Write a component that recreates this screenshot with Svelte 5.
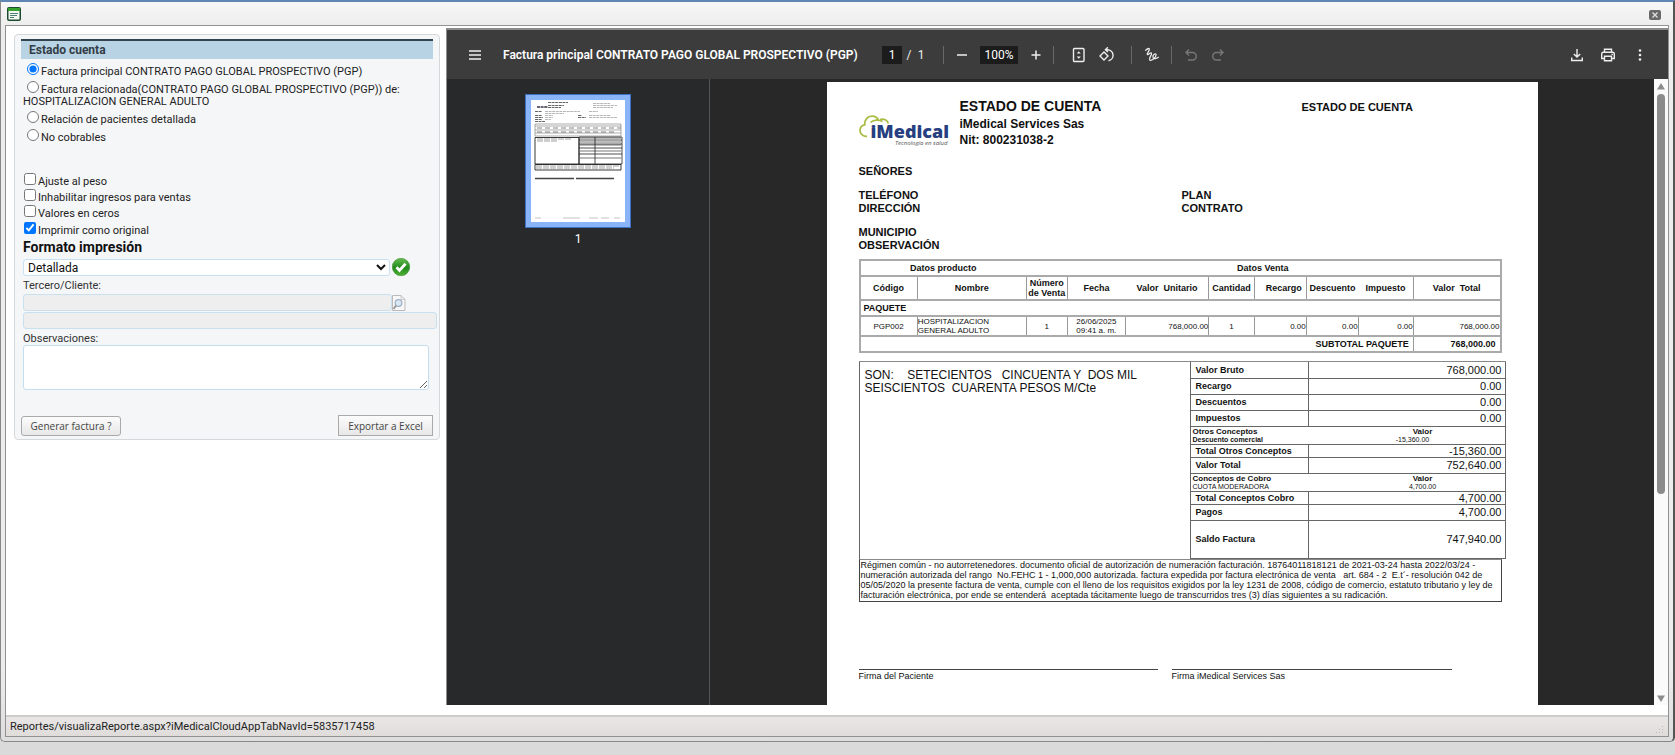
<script>
  let mode = $state('principal');
  let format = $state('Detallada');
  const radios = [
    ['principal', 'Factura principal CONTRATO PAGO GLOBAL PROSPECTIVO (PGP)'],
    ['relacionada', 'Factura relacionada(CONTRATO PAGO GLOBAL PROSPECTIVO (PGP)) de: HOSPITALIZACION GENERAL ADULTO'],
    ['pacientes', 'Relación de pacientes detallada'],
    ['cobrables', 'No cobrables']
  ];
  let checks = $state([
    { label: 'Ajuste al peso', on: false },
    { label: 'Inhabilitar ingresos para ventas', on: false },
    { label: 'Valores en ceros', on: false },
    { label: 'Imprimir como original', on: true }
  ]);
  const legal = [
    'Régimen común - no autorretenedores. documento oficial de autorización de numeración facturación. 18764011818121 de 2021-03-24 hasta 2022/03/24 -',
    'numeración autorizada del rango  No.FEHC 1 - 1,000,000 autorizada. factura expedida por factura electrónica de venta   art. 684 - 2  E.t´- resolución 042 de',
    '05/05/2020 la presente factura de venta, cumple con el lleno de los requisitos exigidos por la ley 1231 de 2008, código de comercio, estatuto tributario y ley de',
    'facturación electrónica, por ende se entenderá  aceptada tácitamente luego de transcurridos tres (3) días siguientes a su radicación.'
  ];
</script>

<div class="window">
  <header class="titlebar">
    <svg width="14" height="14" viewBox="0 0 14 14" aria-hidden="true">
      <rect x=".75" y=".75" width="12.5" height="12.5" rx="1.2" fill="#f4faf2" stroke="#1c4a2e" stroke-width="1.5" />
      <rect x="1" y="1" width="12" height="3" fill="#35a12f" />
      <path d="M3 6.5h8M3 8.5h7M3 10.5h4" stroke="#4b8174" />
    </svg>
    <button class="close" aria-label="Cerrar">
      <svg width="12" height="10" viewBox="0 0 12 10"><path d="M3.5 2.5l5 5M8.5 2.5l-5 5" stroke="#ddd" stroke-width="1.4" /></svg>
    </button>
  </header>

  <div class="frame">
    <div class="body">
      <aside>
        <form class="panel" onsubmit={(e) => e.preventDefault()}>
          <h2>Estado cuenta</h2>
          <div class="fields">
            <div class="radios">
              {#each radios as [value, label]}
                <label><input type="radio" name="mode" {value} bind:group={mode} />{label}</label>
              {/each}
            </div>
            <div class="checks">
              {#each checks as c}
                <label><input type="checkbox" bind:checked={c.on} />{c.label}</label>
              {/each}
            </div>
            <label class="format" for="format">Formato impresión</label>
            <div class="select-row">
              <select id="format" bind:value={format}><option>Detallada</option></select>
              <button class="plain" aria-label="Aceptar">
                <svg width="20" height="18" viewBox="0 0 20 18">
                  <defs><linearGradient id="ok" x1="0" y1="0" x2="0" y2="1"><stop offset="0" stop-color="#66bd4f" /><stop offset=".55" stop-color="#218a1d" /><stop offset="1" stop-color="#4fb334" /></linearGradient></defs>
                  <circle cx="9" cy="9" r="8.7" fill="url(#ok)" stroke="#3f8b34" stroke-width=".6" />
                  <path d="M4.5 9.2l3 3.2 6-6.6" fill="none" stroke="#fff" stroke-width="2.8" />
                </svg>
              </button>
            </div>
            <label class="small" for="tercero">Tercero/Cliente:</label>
            <div class="search-row">
              <input id="tercero" disabled />
              <button class="plain" aria-label="Buscar">
                <svg width="14" height="16" viewBox="0 0 14 16">
                  <path d="M.5.5h8.500l4 4v11H.5z" fill="#f7f7f7" stroke="#bbb" /><path d="M9 .5v4h4" fill="none" stroke="#ccc" />
                  <circle cx="6.500" cy="8" r="3.300" fill="#d9e8f5" stroke="#a3b2c2" stroke-width="1.300" /><path d="M4 10.500l-2.500 3.500" stroke="#999" stroke-width="2" />
                </svg>
              </button>
            </div>
            <input class="name" aria-label="Nombre del tercero" disabled />
            <label class="small obs" for="obs">Observaciones:</label>
            <textarea id="obs"></textarea>
          </div>
          <div class="actions">
            <button class="generate">Generar factura ?</button>
            <button class="export">Exportar a Excel</button>
          </div>
        </form>
      </aside>

      <section class="viewer">
        <div class="toolbar">
          <div class="left">
            <button class="plain" aria-label="Menú"><svg width="14" height="12" viewBox="0 0 14 12"><path d="M1 2h12M1 6h12M1 10h12" stroke="#eee" stroke-width="1.500" /></svg></button>
            <strong>Factura principal CONTRATO PAGO GLOBAL PROSPECTIVO (PGP)</strong>
          </div>
          <div class="center">
            <input class="pageno" aria-label="Página" value="1" /><span class="slash">/</span><span class="count">1</span>
            <i class="sep"></i>
            <button class="plain tool" aria-label="Alejar"><svg width="12" height="12" viewBox="0 0 12 12"><path d="M1 6h10" stroke="#eee" stroke-width="1.500" /></svg></button>
            <input class="zoom" aria-label="Zoom" value="100%" />
            <button class="plain tool" aria-label="Acercar"><svg width="12" height="12" viewBox="0 0 12 12"><path d="M1.500 6h9M6 1.500v9" stroke="#eee" stroke-width="1.500" /></svg></button>
            <i class="sep two"></i>
            <button class="plain tool" aria-label="Ajustar a la página"><svg width="16" height="16" viewBox="0 0 16 16" fill="none"><rect x="2.500" y="1.500" width="10.500" height="13" rx="1" stroke="#eee" stroke-width="1.400" /><path d="M5.700 6.500l2.050-2.300 2.050 2.300zM5.700 9.500l2.050 2.300 2.050-2.300z" fill="#eee" /></svg></button>
            <button class="plain tool" aria-label="Girar"><svg width="16" height="16" viewBox="0 0 16 16" fill="none" stroke="#eee" stroke-width="1.400"><path d="M5 5l4 4-4 4-4-4z" /><path d="M6.500 2.700h2a5.600 5.600 0 0 1 1 11.100M8.900.3L6.400 2.700l2.500 2.400" /></svg></button>
            <i class="sep three"></i>
            <button class="plain tool" aria-label="Dibujar"><svg width="16" height="16" viewBox="0 0 16 16" fill="none" stroke="#eee" stroke-width="1.300"><path d="M1.300 3.600C2.600 2.200 4.500.8 5.300 1.900 6.200 3.300 2.400 6.500 3.400 7.500 4.200 8.300 6.300 5.200 7.400 6.100 8.600 7.300 4.500 11 5.600 12.800 7 14.700 12.300 10.500 12.100 7.600 11.900 5.500 8.300 7.800 9 10.300 9.700 12.600 13 11.400 14.800 10" /></svg></button>
            <i class="sep four"></i>
            <button class="plain tool" aria-label="Deshacer"><svg width="14" height="14" viewBox="0 0 14 14" fill="none" stroke="#777" stroke-width="1.400"><path d="M5 1.500L2 4.500l3 3M2 4.500h6.500a3.600 3.600 0 0 1 0 7.500H4" /></svg></button>
            <button class="plain tool redo" aria-label="Rehacer"><svg width="14" height="14" viewBox="0 0 14 14" fill="none" stroke="#777" stroke-width="1.400"><path d="M9 1.500l3 3-3 3M12 4.500H5.500a3.600 3.600 0 0 0 0 7.500H10" /></svg></button>
          </div>
          <div class="right">
            <button class="plain tool" aria-label="Descargar"><svg width="14" height="14" viewBox="0 0 14 14" fill="none" stroke="#eee" stroke-width="1.400"><path d="M7 1v8M3.800 5.900L7 9.100l3.200-3.200M1.700 9.500v3h10.600v-3" /></svg></button>
            <button class="plain tool" aria-label="Imprimir"><svg width="16" height="16" viewBox="0 0 16 16" fill="none" stroke="#eee" stroke-width="1.400"><path d="M4.500 5V2.200h7V5M4.200 11.500H1.700V7q0-1.700 1.700-1.700h9.200q1.700 0 1.700 1.700v4.500h-2.500M4.500 9.200h7v4.600h-7z" /><path d="M11.500 7.400h1.400" /></svg></button>
            <button class="plain tool" aria-label="Más"><svg width="8" height="14" viewBox="0 0 8 14" fill="#eee"><circle cx="4" cy="2.500" r="1.300" /><circle cx="4" cy="7" r="1.300" /><circle cx="4" cy="11.500" r="1.300" /></svg></button>
          </div>
        </div>

        <div class="stage">
          <nav class="thumbs">
            <svg class="thumb" viewBox="0 0 94 122" aria-hidden="true">
              <rect width="94" height="122" fill="#fff" />
              <g stroke="#555" stroke-width=".9" stroke-dasharray="3 .6">
                <path d="M17 2.500h20M17 5.500h16M17 7.500h13" /><path d="M6 7h11" stroke="#334" stroke-width="1.600" /><path d="M62 3.500h17M62 5.500h24M62 7.500h20" stroke="#999" stroke-width=".7" />
                <path d="M4 11.500h7M4 15.500h7M4 17.500h8M4 19.500h7M4 21.500h10M47 15.500h4M47 17.500h8" />
                <path d="M14 11.500h35M14 13.500h19M14 15.500h8M14 17.500h8M14 19.500h6M58 11.500h9M58 15.500h22M58 17.500h28" stroke="#999" stroke-width=".7" />
              </g>
              <g fill="none" stroke="#888" stroke-width=".7"><path d="M4 24h86v12H4zM4 26h86M4 30h86M4 33h86" /><path d="M6 28h84M6 32h80" stroke="#555" stroke-dasharray="5 3" /></g>
              <g fill="none" stroke="#222"><path d="M4 37.500h44V64H4zM4 64.500h86v5.500H4z" stroke-width=".9" /><path d="M49 38h41M49 42h41M49 45h41M49 51h41M49 58h41" stroke="#777" stroke-width="1.200" /><path d="M48 37h43v27H48zM64 37v27M48 40h43M48 44h43M48 48h43M48 54h43" stroke-width=".8" /><path d="M6 39h34M6 41h20M5 66h83M5 68h78" stroke="#777" stroke-width=".7" stroke-dasharray="6 1" /></g>
              <path d="M4 78.500h39M45 78.500h38" stroke="#444" stroke-width="1.400" /><path d="M4 118h6M32 118h17M58 118h9M70 118h8M83 118h6" stroke="#aaa" stroke-width=".7" />
            </svg>
            <span>1</span>
          </nav>

          <div class="canvas">
            <article class="page">
              <div class="head">
                <div class="logo">
                  <svg width="34" height="24" viewBox="0 0 34 24" aria-hidden="true" fill="none" stroke="#a9bd44" stroke-width="1.800"><path d="M8 21.500C3.500 21.500 1 18.500 1 15.500c0-3 2.300-5.200 4.700-5.700C5.300 5 8.500 1.200 13 1.200c3.300 0 5.700 2 6.800 4.500M11.500 7.500c2.300-2.500 8.500-3.500 12-1M21 4.500c4-1.500 7.500 1 8.300 4" /></svg>
                  <b>iMedical</b><em>Tecnología en salud</em>
                </div>
                <div class="company">
                  <h1>ESTADO DE CUENTA</h1>
                  <p>iMedical Services Sas</p>
                  <p>Nit: 800231038-2</p>
                </div>
                <h3>ESTADO DE CUENTA</h3>
              </div>

              <div class="meta">
                <p class="gap">SEÑORES</p><p></p>
                <p>TELÉFONO</p><p>PLAN</p>
                <p class="gap">DIRECCIÓN</p><p>CONTRATO</p>
                <p>MUNICIPIO</p><p></p>
                <p>OBSERVACIÓN</p><p></p>
              </div>

              <table class="items">
                <colgroup><col style="width:9%" /><col style="width:17%" /><col style="width:6.4%" /><col style="width:9.1%" /><col style="width:13%" /><col style="width:7.1%" /><col style="width:8.1%" /><col style="width:8.1%" /><col style="width:8.6%" /><col style="width:13.6%" /></colgroup>
                <tbody>
                  <tr class="r1"><th colspan="2" class="nr">Datos producto</th><th colspan="8">Datos Venta</th></tr>
                  <tr class="r2"><th>Código</th><th>Nombre</th><th>Número<br />de&nbsp;Venta</th><th class="nr">Fecha</th><th>Valor&nbsp; Unitario</th><th>Cantidad</th><th class="r">Recargo</th><th class="nr">Descuento</th><th>Impuesto</th><th>Valor&nbsp; Total</th></tr>
                  <tr class="r1"><th colspan="10" class="l">PAQUETE</th></tr>
                  <tr class="r3"><td>PGP002</td><td class="l0">HOSPITALIZACION<br />GENERAL ADULTO</td><td>1</td><td>26/06/2025<br />09:41 a. m.</td><td class="r0">768,000.00</td><td>1</td><td class="r0">0.00</td><td class="r0">0.00</td><td class="r0">0.00</td><td class="r0">768,000.00</td></tr>
                  <tr class="r4"><th colspan="9" class="r">SUBTOTAL PAQUETE</th><th class="r">768,000.00</th></tr>
                </tbody>
              </table>

              <div class="summary">
                <p class="words">SON:    SETECIENTOS   CINCUENTA Y  DOS MIL
SEISCIENTOS  CUARENTA PESOS M/Cte</p>
                <table class="totals">
                  <colgroup><col style="width:37.500%" /><col /></colgroup>
                  <tbody>
                    <tr class="t16"><th>Valor Bruto</th><td>768,000.00</td></tr>
                    <tr class="t16"><th>Recargo</th><td>0.00</td></tr>
                    <tr class="t16"><th>Descuentos</th><td>0.00</td></tr>
                    <tr class="t16"><th>Impuestos</th><td>0.00</td></tr>
                    <tr class="t18"><td colspan="2"><div class="mini"><b>Otros Conceptos</b><b>Valor</b><b class="tiny">Descuento comercial</b><span class="tiny neg">-15,360.00</span></div></td></tr>
                    <tr class="t13"><th>Total Otros Conceptos</th><td>-15,360.00</td></tr>
                    <tr class="t16"><th>Valor Total</th><td>752,640.00</td></tr>
                    <tr class="t18"><td colspan="2"><div class="mini"><b>Conceptos de Cobro</b><b>Valor</b><span class="tiny">CUOTA MODERADORA</span><span class="tiny">4,700.00</span></div></td></tr>
                    <tr class="t13"><th>Total Conceptos Cobro</th><td>4,700.00</td></tr>
                    <tr class="t16"><th>Pagos</th><td>4,700.00</td></tr>
                    <tr class="t38"><th>Saldo Factura</th><td>747,940.00</td></tr>
                  </tbody>
                </table>
              </div>

              <div class="legal">{#each legal as line}<p>{line}</p>{/each}</div>

              <div class="signs"><p>Firma del Paciente</p><p>Firma iMedical Services Sas</p></div>
            </article>
          </div>

          <div class="scroll" aria-hidden="true">
            <svg width="10" height="7" viewBox="0 0 10 7"><path d="M5 0l4 6.500H1z" fill="#8b8b8b" /></svg>
            <div class="track"><div class="bar"></div></div>
            <svg width="10" height="7" viewBox="0 0 10 7"><path d="M5 7l4-6.500H1z" fill="#8b8b8b" /></svg>
          </div>
        </div>
      </section>
    </div>
    <footer>
      <span>Reportes/visualizaReporte.aspx?iMedicalCloudAppTabNavId=5835717458</span>
      <svg width="9" height="9" viewBox="0 0 9 9" fill="#bbb" aria-hidden="true"><path d="M7 1h1v1H7zM4 4h1v1H4zM7 4h1v1H7zM1 7h1v1H1zM4 7h1v1H4zM7 7h1v1H7z" /></svg>
    </footer>
  </div>
</div>

<style>
  :global(body) { background: #d8d8d8; }
  :global(#app) { height: 100vh; display: flex; flex-direction: column; background: linear-gradient(#cecece, #dadada); }
  * { box-sizing: border-box; }
  p, h1, h2, h3 { margin: 0; }
  .window { flex: 1; min-height: 0; margin: 0 0 13px; display: flex; flex-direction: column; border: 1px solid #888; border-top: 2px solid #5f86b5; border-right: 2px solid #555; border-radius: 0 0 5px 5px; padding: 0 4px 4px; background: linear-gradient(#f7f7f7, #ededed 24px, #ededed 90%, #ddd); font: 11px/16px Roboto, sans-serif; color: #222; }
  .titlebar { flex: none; height: 23px; display: flex; align-items: center; justify-content: space-between; padding: 0 8px 0 2px; }
  .plain { border: 0; padding: 0; background: none; display: flex; }
  .close { width: 12px; height: 10px; margin-top: 2px; padding: 0; border: 0; border-radius: 2px; background: #686868; display: flex; }
  .frame { flex: 1; min-height: 0; display: flex; flex-direction: column; border: 1px solid #929292; background: #fff; }
  .body { flex: 1; min-height: 0; display: flex; padding: 2px 0 10px; }
  aside { flex: none; width: 440px; padding: 6px 6px 0 8px; }
  .panel { border: 1px solid #d5d8da; border-radius: 4px; background: #f5f6f8; padding: 4px 6px 3px; }
  h2 { height: 20px; border-top: 2px solid #34444e; background: #b8d3e4; padding-left: 8px; font-size: 12px; line-height: 18px; font-weight: 700; color: #333d45; }
  .fields { padding-left: 2px; display: flex; flex-direction: column; }
  .radios { padding-top: 3px; display: flex; flex-direction: column; gap: 1px; }
  .radios label { line-height: 12px; padding: 1px 10px 1px 0; }
  .radios input { width: 12px; height: 12px; margin: 0 2px 0 4px; vertical-align: 0; }
  .checks { padding: 28px 0 0 1px; display: flex; flex-direction: column; }
  .checks label { height: 17px; line-height: 17px; }
  .checks label:nth-child(-n + 2) { height: 16px; }
  .checks input { width: 12px; height: 12px; margin: 0 2px 0 0; vertical-align: 0; }
  .format { font-size: 14px; line-height: 17px; font-weight: 700; color: #111; padding-bottom: 2px; }
  .select-row { display: flex; align-items: center; gap: 2px; height: 18px; }
  select { width: 367px; height: 17px; border: 1px solid #c9e0f2; border-radius: 3px; background: #fff; font: 12px Roboto, sans-serif; padding: 0; color: #111; }
  .small { line-height: 16px; padding-top: 2px; color: #333; }
  .search-row { display: flex; align-items: center; }
  .search-row input { width: 369px; height: 17px; }
  input:disabled { border: 1px solid #c9e0ee; border-radius: 3px; background: #eee; margin: 0; padding: 0; }
  .fields .name { width: 414px; height: 17px; margin-top: 1px; }
  .obs { padding-top: 3px; line-height: 13px; }
  textarea { width: 406px; height: 45px; border: 1px solid #c4def0; border-radius: 3px; background: #fff; display: block; }
  .actions { display: flex; justify-content: space-between; align-items: center; padding-top: 25px; }
  .actions button { height: 20px; padding: 0; border: 1px solid #aaa; background: linear-gradient(#fcfcfc, #e7e7e7); font: 10px/16px "Open Sans", sans-serif; color: #444; }
  .actions .generate { width: 100px; border-radius: 3px; }
  .actions .export { width: 95px; height: 21px; }

  .viewer { flex: 1; min-width: 0; display: flex; flex-direction: column; border: 1px solid #8c8c8c; border-top-width: 2px; border-right: 0; border-bottom: 0; background: #282828; }
  .toolbar { flex: none; height: 49px; display: flex; align-items: center; background: #3c3c3c; color: #eee; font-size: 12px; padding: 0 24px 0 21px; }
  .left { display: flex; align-items: center; gap: 21px; width: 414px; flex: none; }
  .left strong { font: 600 12px/16px Roboto, sans-serif; white-space: nowrap; color: #fff; }
  .center { display: flex; align-items: center; }
  .toolbar input { height: 18px; border: 0; margin: 0; padding: 0; background: #1c1c1c; color: #fff; text-align: center; font: 12px/18px Roboto, sans-serif; }
  .pageno { width: 20px; }
  .zoom { width: 38px; }
  .slash { width: 14px; text-align: center; }
  .count { width: 10px; text-align: center; }
  .sep { width: 1px; height: 18px; background: #686868; margin: 0 12px 0 17px; }
  .zoom + .tool { margin-left: 12px; }
  .tool + .zoom { margin-left: 12px; }
  .two { margin: 0 17px 0 11px; }
  .three { margin: 0 12px 0 16px; }
  .four { margin: 0 12px 0 11px; }
  .two + .tool { margin-right: 12px; }
  .redo { margin-left: 13px; }
  .right { margin-left: auto; display: flex; align-items: center; gap: 16px; }
  .right .tool:last-child { margin-left: 4px; }
  .stage { flex: 1; min-height: 0; display: flex; }
  .thumbs { flex: none; width: 263px; border-right: 1px solid #555; background: #28292b; padding-top: 15px; display: flex; flex-direction: column; align-items: center; gap: 2px; color: #fff; font-size: 12px; line-height: 18px; }
  .thumb { width: 106px; height: 134px; border: 6px solid #8ab4f8; outline: 1px solid #3d6fc4; outline-offset: -1px; }
  .canvas { flex: 1; min-width: 0; overflow: hidden; padding-top: 3px; display: flex; justify-content: center; }
  .page { flex: none; width: 711px; min-height: 920px; background: #fff; padding: 14px 32px 0; color: #111; font-family: "Liberation Sans", Arial, sans-serif; }
  .head { display: grid; grid-template-columns: 101px 342px 1fr; height: 65px; }
  .logo { position: relative; width: 90px; height: 32px; margin-top: 19px; }
  .logo svg { position: absolute; left: 0; top: 0; }
  .logo b { position: absolute; left: 12px; top: 8px; font: 800 18px/16px "Open Sans", sans-serif; color: #273f80; }
  .logo em { position: absolute; right: 1px; top: 25px; font: italic 6px/6px "Open Sans", sans-serif; color: #555; white-space: nowrap; }
  h1 { font-size: 14px; line-height: 20px; }
  .company p { font-size: 12px; line-height: 16px; font-weight: 700; }
  h3 { font-size: 11px; line-height: 22px; }
  .meta { display: grid; grid-template-columns: 323px 1fr; padding-top: 4px; font-size: 11px; line-height: 13px; font-weight: 700; }
  .meta p { min-height: 13px; }
  .meta .gap { padding-bottom: 11px; }
  table { border-collapse: collapse; table-layout: fixed; }
  th, td { padding: 0; }
  .items { width: calc(100% - 4px); margin-top: 7px; font-size: 9px; line-height: 10px; border: 2px solid #aaa; }
  .items th, .items td { border: 1px solid #999; border-top: 2px solid #aaa; text-align: center; }
  .items td { font-size: 8px; line-height: 9px; }
  .items .nr { border-right: 0; }
  .items .nr + th { border-left: 0; }
  .items .l { text-align: left; padding-left: 3px; }
  .items .l0 { text-align: left; }
  .items .r { text-align: right; padding-right: 4px; }
  .items .r0 { text-align: right; }
  .r1 { height: 16px; }
  .r2 { height: 24px; }
  .r3 { height: 20px; }
  .r4 { height: 16px; }
  .summary { display: flex; margin-top: 8px; border-top: 1px solid #888; }
  .words { flex: 1; border-left: 1px solid #666; white-space: pre; font-size: 12px; line-height: 13px; padding: 7px 0 0 5px; }
  .totals { width: 316px; }
  .totals th, .totals td { border: 1px solid #666; }
  .totals tr:first-child > * { border-top: 0; }
  .totals th { text-align: left; padding-left: 5px; font-size: 9px; line-height: 12px; }
  .totals td { text-align: right; padding-right: 3px; font-size: 11px; line-height: 12px; }
  .totals td[colspan] { padding: 0; }
  .t13 { height: 13px; }
  .t16 { height: 16px; }
  .t18 { height: 18px; }
  .t38 { height: 38px; }
  .mini { display: grid; grid-template-columns: 152px 160px; text-align: center; font-size: 8px; line-height: 9px; }
  .mini > :nth-child(odd) { text-align: left; padding-left: 2px; }
  .mini .tiny { font-size: 7px; line-height: 8px; }
  .mini .neg { padding-right: 20px; }
  .legal { width: calc(100% - 4px); border: 1px solid #444; border-top-color: #888; padding: 0 1px 1px; font-size: 9px; line-height: 10px; white-space: pre; }
  .signs { display: grid; grid-template-columns: 299px 280px; gap: 14px; margin-top: 67px; font-size: 9px; line-height: 12px; }
  .signs p { border-top: 1px solid #444; }
  .scroll { flex: none; width: 14px; background: #fafafa; display: flex; flex-direction: column; align-items: center; padding: 4px 0 3px; }
  .track { flex: 1; width: 8px; padding: 4px 0; }
  .bar { height: 67%; border-radius: 4px; background: #8b8b8b; }
  footer { flex: none; height: 21px; display: flex; justify-content: space-between; align-items: center; padding: 0 4px 0 4px; border-top: 2px solid #ccc; background: linear-gradient(#e9e7e6, #dfdcda); line-height: 18px; }
  footer svg { margin-top: 6px; }
</style>
